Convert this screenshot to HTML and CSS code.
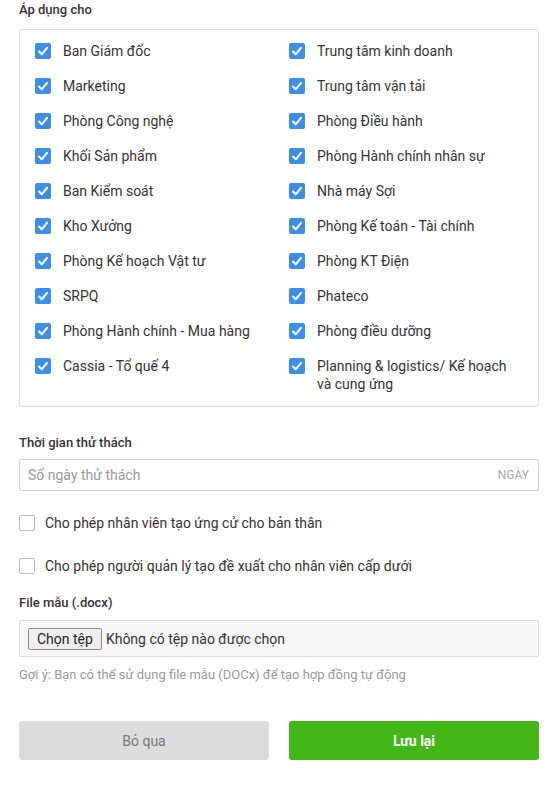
FILE: index.html
```html
<!DOCTYPE html>
<html lang="vi">
<head>
<meta charset="utf-8">
<link rel="stylesheet" href="styles.css">
</head>
<body>
<div class="page">
  <div class="label first">Áp dụng cho</div>
  <div class="box">
    <div class="grid">
      <div class="item"><span class="cb on"><svg viewBox="0 0 16 16"><path d="M4 8.5 L6.8 11.3 L12 4.8"/></svg></span><span class="txt">Ban Giám đốc</span></div>
      <div class="item"><span class="cb on"><svg viewBox="0 0 16 16"><path d="M4 8.5 L6.8 11.3 L12 4.8"/></svg></span><span class="txt">Trung tâm kinh doanh</span></div>
      <div class="item"><span class="cb on"><svg viewBox="0 0 16 16"><path d="M4 8.5 L6.8 11.3 L12 4.8"/></svg></span><span class="txt">Marketing</span></div>
      <div class="item"><span class="cb on"><svg viewBox="0 0 16 16"><path d="M4 8.5 L6.8 11.3 L12 4.8"/></svg></span><span class="txt">Trung tâm vận tải</span></div>
      <div class="item"><span class="cb on"><svg viewBox="0 0 16 16"><path d="M4 8.5 L6.8 11.3 L12 4.8"/></svg></span><span class="txt">Phòng Công nghệ</span></div>
      <div class="item"><span class="cb on"><svg viewBox="0 0 16 16"><path d="M4 8.5 L6.8 11.3 L12 4.8"/></svg></span><span class="txt">Phòng Điều hành</span></div>
      <div class="item"><span class="cb on"><svg viewBox="0 0 16 16"><path d="M4 8.5 L6.8 11.3 L12 4.8"/></svg></span><span class="txt">Khối Sản phẩm</span></div>
      <div class="item"><span class="cb on"><svg viewBox="0 0 16 16"><path d="M4 8.5 L6.8 11.3 L12 4.8"/></svg></span><span class="txt">Phòng Hành chính nhân sự</span></div>
      <div class="item"><span class="cb on"><svg viewBox="0 0 16 16"><path d="M4 8.5 L6.8 11.3 L12 4.8"/></svg></span><span class="txt">Ban Kiểm soát</span></div>
      <div class="item"><span class="cb on"><svg viewBox="0 0 16 16"><path d="M4 8.5 L6.8 11.3 L12 4.8"/></svg></span><span class="txt">Nhà máy Sợi</span></div>
      <div class="item"><span class="cb on"><svg viewBox="0 0 16 16"><path d="M4 8.5 L6.8 11.3 L12 4.8"/></svg></span><span class="txt">Kho Xưởng</span></div>
      <div class="item"><span class="cb on"><svg viewBox="0 0 16 16"><path d="M4 8.5 L6.8 11.3 L12 4.8"/></svg></span><span class="txt">Phòng Kế toán - Tài chính</span></div>
      <div class="item"><span class="cb on"><svg viewBox="0 0 16 16"><path d="M4 8.5 L6.8 11.3 L12 4.8"/></svg></span><span class="txt">Phòng Kế hoạch Vật tư</span></div>
      <div class="item"><span class="cb on"><svg viewBox="0 0 16 16"><path d="M4 8.5 L6.8 11.3 L12 4.8"/></svg></span><span class="txt">Phòng KT Điện</span></div>
      <div class="item"><span class="cb on"><svg viewBox="0 0 16 16"><path d="M4 8.5 L6.8 11.3 L12 4.8"/></svg></span><span class="txt">SRPQ</span></div>
      <div class="item"><span class="cb on"><svg viewBox="0 0 16 16"><path d="M4 8.5 L6.8 11.3 L12 4.8"/></svg></span><span class="txt">Phateco</span></div>
      <div class="item"><span class="cb on"><svg viewBox="0 0 16 16"><path d="M4 8.5 L6.8 11.3 L12 4.8"/></svg></span><span class="txt">Phòng Hành chính - Mua hàng</span></div>
      <div class="item"><span class="cb on"><svg viewBox="0 0 16 16"><path d="M4 8.5 L6.8 11.3 L12 4.8"/></svg></span><span class="txt">Phòng điều dưỡng</span></div>
      <div class="item"><span class="cb on"><svg viewBox="0 0 16 16"><path d="M4 8.5 L6.8 11.3 L12 4.8"/></svg></span><span class="txt">Cassia - Tổ quế 4</span></div>
      <div class="item"><span class="cb on"><svg viewBox="0 0 16 16"><path d="M4 8.5 L6.8 11.3 L12 4.8"/></svg></span><span class="txt">Planning &amp; logistics/ Kế hoạch và cung ứng</span></div>
    </div>
  </div>

  <div class="label l-time">Thời gian thử thách</div>
  <div class="input">
    <span class="placeholder">Số ngày thử thách</span>
    <span class="suffix">NGÀY</span>
  </div>

  <div class="opt opt1"><span class="cb off"></span><span class="txt">Cho phép nhân viên tạo ứng cử cho bản thân</span></div>
  <div class="opt opt2"><span class="cb off"></span><span class="txt">Cho phép người quản lý tạo đề xuất cho nhân viên cấp dưới</span></div>

  <div class="label l-file">File mẫu (.docx)</div>
  <div class="filebox">
    <span class="filebtn">Chọn tệp</span>
    <span class="filename">Không có tệp nào được chọn</span>
  </div>
  <div class="hint">Gợi ý: Bạn có thể sử dụng file mẫu (DOCx) để tạo hợp đồng tự động</div>

  <div class="actions">
    <div class="btn cancel">Bỏ qua</div>
    <div class="btn save">Lưu lại</div>
  </div>
</div>
</body>
</html>
```
FILE: styles.css
```css
* { box-sizing: border-box; }
html, body { margin: 0; padding: 0; background: #fff; }
body {
  font-family: Roboto, "Liberation Sans", Arial, sans-serif;
  color: #333;
  font-size: 14px;
}
.page { width: 520px; margin-left: 19px; padding-top: 2px; }
.label {
  font-size: 13px;
  line-height: 16px;
  font-weight: 500;
  color: #333;
}
.box {
  margin-top: 11px;
  border: 1px solid #dddddd;
  border-radius: 3px;
  padding: 12px 18px 13px 15px;
}
.grid {
  display: grid;
  grid-template-columns: 254px 1fr;
  row-gap: 17px;
}
.item { display: flex; align-items: flex-start; }
.cb {
  flex: none;
  width: 16px;
  height: 16px;
  border-radius: 2px;
  margin-top: 1px;
  margin-right: 12px;
  display: block;
}
.cb.on { background: #3d8ee8; }
.cb.on svg { width: 16px; height: 16px; display: block; }
.cb.on path { fill: none; stroke: #fff; stroke-width: 2; stroke-linecap: round; stroke-linejoin: round; }
.txt { line-height: 18px; font-size: 14px; color: #333; }

.l-time { margin-top: 28px; }
.input {
  margin-top: 8px;
  height: 32px;
  border: 1px solid #d4d4d4;
  border-radius: 2px;
  display: flex;
  align-items: center;
  justify-content: space-between;
  padding: 0 9px 0 8px;
}
.placeholder { color: #999; font-size: 14px; }
.suffix { color: #aaa; font-size: 12px; }

.opt { display: flex; align-items: flex-start; }
.opt1 { margin-top: 23px; }
.opt2 { margin-top: 25px; }
.cb.off {
  background: #fff;
  border: 1px solid #bbb;
  margin-right: 10px;
}
.l-file { margin-top: 20px; }
.filebox {
  margin-top: 9px;
  height: 37px;
  background: #f7f7f7;
  border: 1px solid #dcdcdc;
  border-radius: 2px;
  display: flex;
  align-items: center;
  padding-left: 8px;
}
.filebtn {
  height: 22px;
  line-height: 20px;
  padding: 0 8px;
  background: #efefef;
  border: 1px solid #8a8a8a;
  border-radius: 2px;
  font-size: 14px;
  color: #222;
}
.filename { margin-left: 4px; font-size: 14px; color: #333; }
.hint {
  margin-top: 10px;
  font-size: 13px;
  line-height: 16px;
  color: #999;
}
.actions {
  margin-top: 38px;
  display: grid;
  grid-template-columns: 1fr 1fr;
  column-gap: 20px;
}
.btn {
  height: 39px;
  border-radius: 3px;
  display: flex;
  align-items: center;
  justify-content: center;
  font-size: 14px;
}
.cancel { background: #dddddd; color: #777; }
.save { background: #43b718; color: #fff; font-weight: 700; }
```
